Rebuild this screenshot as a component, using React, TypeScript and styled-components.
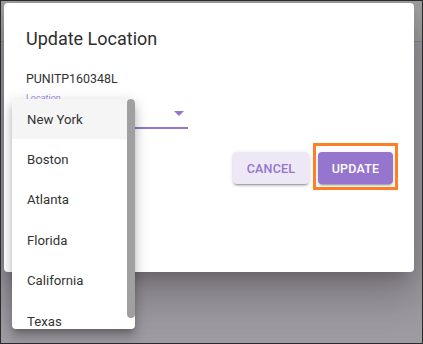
import styled, { createGlobalStyle } from "styled-components";

const GlobalStyle = createGlobalStyle`
  html, body {
    margin: 0;
    padding: 0;
    background: #ffffff;
    font-family: Roboto, "Liberation Sans", Arial, sans-serif;
  }
  * {
    box-sizing: border-box;
  }
`;

const Frame = styled.div`
  position: relative;
  width: 423px;
  height: 344px;
  border: 1px solid #2b2b2b;
  overflow: hidden;
  background: #f3edf9;
`;

const PageHeader = styled.header`
  height: 53px;
  background: #f7f7f7;
  border-bottom: 1px solid #d6d6d6;
  padding: 0 0 0 27px;
`;

const PageTitle = styled.h1`
  margin: -12px 0 0;
  font-size: 13px;
  font-weight: 400;
  line-height: 16px;
  color: #333;
`;

const Backdrop = styled.div`
  position: absolute;
  inset: 0;
  background: rgba(0, 0, 0, 0.35);
  display: flex;
  align-items: flex-start;
  padding: 2px 8px 0 3px;
`;

const Dialog = styled.div`
  position: relative;
  width: 410px;
  height: 269px;
  background: #fff;
  border-radius: 4px;
  box-shadow: 0 11px 15px -7px rgba(0, 0, 0, 0.2), 0 24px 38px 3px rgba(0, 0, 0, 0.14),
    0 9px 46px 8px rgba(0, 0, 0, 0.12);
  padding: 22px 21px 0 22px;
  display: flex;
  flex-direction: column;
`;

const Title = styled.h2`
  margin: 0;
  font-size: 18px;
  font-weight: 400;
  line-height: 28px;
  color: #2e2e2e;
`;

const AssetId = styled.div`
  margin-top: 19px;
  font-size: 12.4px;
  line-height: 14px;
  color: #333;
`;

const Field = styled.div`
  margin-top: 7px;
  width: 162px;
  display: flex;
  flex-direction: column;
`;

const FieldLabel = styled.label`
  font-size: 9px;
  line-height: 11px;
  color: #a58bd8;
`;

const SelectBox = styled.div`
  height: 25px;
  border-bottom: 2px solid #9575cd;
  display: flex;
  align-items: center;
  justify-content: flex-end;
  padding: 0 4px 4px 0;
`;

const Actions = styled.div`
  margin-top: 23px;
  display: flex;
  justify-content: flex-end;
  gap: 9px;
`;

const Button = styled.button<{ $primary?: boolean }>`
  position: relative;
  height: 32px;
  width: ${(p) => (p.$primary ? "75px" : "76px")};
  border: none;
  border-radius: 4px;
  font-family: Roboto, "Liberation Sans", Arial, sans-serif;
  font-size: 12.5px;
  font-weight: 500;
  letter-spacing: 0.2px;
  text-transform: uppercase;
  background: ${(p) => (p.$primary ? "#9575cd" : "#ede7f6")};
  color: ${(p) => (p.$primary ? "#ffffff" : "#9575cd")};
  box-shadow: 0 3px 1px -2px rgba(0, 0, 0, 0.2), 0 2px 2px 0 rgba(0, 0, 0, 0.14),
    0 1px 5px 0 rgba(0, 0, 0, 0.12);
`;

const Highlight = styled.span`
  position: absolute;
  top: -9px;
  left: -5px;
  right: -5px;
  bottom: -6px;
  border: 3px solid #ff7f27;
  pointer-events: none;
`;

const Menu = styled.div`
  position: absolute;
  left: 11px;
  top: 98px;
  width: 123px;
  height: 230px;
  background: #fff;
  border-radius: 4px;
  overflow: hidden;
  box-shadow: 0 5px 5px -3px rgba(0, 0, 0, 0.2), 0 8px 10px 1px rgba(0, 0, 0, 0.14),
    0 3px 14px 2px rgba(0, 0, 0, 0.12);
`;

const MenuList = styled.ul`
  margin: 0;
  padding: 0;
  list-style: none;
  height: 100%;
  overflow: hidden;
`;

const ScrollThumb = styled.div`
  position: absolute;
  top: 0;
  right: 0;
  width: 8px;
  height: 219px;
  border-radius: 4px;
  background: #a0a0a0;
`;

const MenuItem = styled.li<{ $active?: boolean }>`
  height: 40.4px;
  display: flex;
  align-items: center;
  padding-left: 15px;
  font-size: 13.2px;
  color: #333;
  background: ${(p) => (p.$active ? "#f5f5f5" : "transparent")};
`;

const cities = ["New York", "Boston", "Atlanta", "Florida", "California", "Texas"];

export default function App() {
  return (
    <>
      <GlobalStyle />
      <Frame>
        <PageHeader>
          <PageTitle>Performance</PageTitle>
        </PageHeader>
        <Backdrop>
          <Dialog>
            <Title>Update Location</Title>
            <AssetId>PUNITP160348L</AssetId>
            <Field>
              <FieldLabel>Location</FieldLabel>
              <SelectBox>
                <svg width="10" height="5" viewBox="0 0 10 5">
                  <path d="M0 0h10L5 5z" fill="#9575cd" />
                </svg>
              </SelectBox>
            </Field>
            <Actions>
              <Button>Cancel</Button>
              <Button $primary>
                Update
                <Highlight />
              </Button>
            </Actions>
          </Dialog>
        </Backdrop>
        <Menu>
          <MenuList>
            {cities.map((c, i) => (
              <MenuItem key={c} $active={i === 0}>
                {c}
              </MenuItem>
            ))}
          </MenuList>
          <ScrollThumb />
        </Menu>
      </Frame>
    </>
  );
}
